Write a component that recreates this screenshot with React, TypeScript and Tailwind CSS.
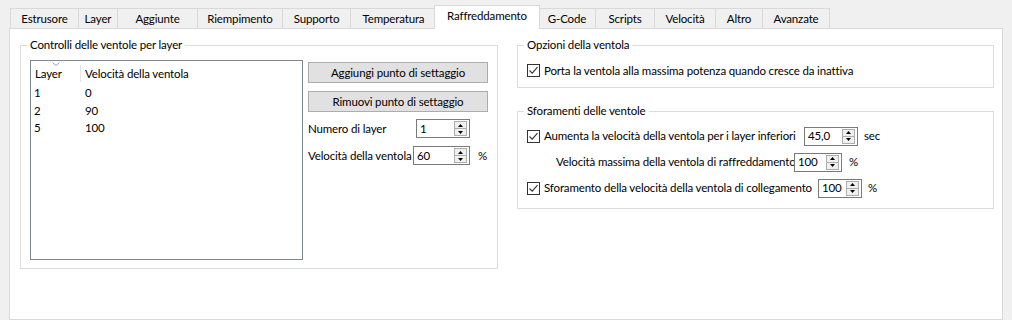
import React from 'react'

const tabs = ['Estrusore', 'Layer', 'Aggiunte', 'Riempimento', 'Supporto', 'Temperatura', 'Raffreddamento', 'G-Code', 'Scripts', 'Velocità', 'Altro', 'Avanzate']
const tabW: Record<string, string> = {
  Estrusore: 'w-[68px]', Layer: 'w-[39px]', Aggiunte: 'w-[80px]', Riempimento: 'w-[85px]', Supporto: 'w-[68px]',
  Temperatura: 'w-[86px]', Raffreddamento: 'w-[106px]', 'G-Code': 'w-[57px]', Scripts: 'w-[59px]', 'Velocità': 'w-[61px]',
  Altro: 'w-[47px]', Avanzate: 'w-[68px]',
}

const rows = [['1', '0'], ['2', '90'], ['5', '100']]

function Check() {
  return (
    <span className="flex h-[13px] w-[13px] shrink-0 items-center justify-center border border-[#333] bg-white">
      <svg width="11" height="11" viewBox="0 0 11 11"><path d="M1.5 5.5 L4.2 8.2 L9.5 2.2" fill="none" stroke="#333" strokeWidth="1.1" /></svg>
    </span>
  )
}

function Spin({ value, w }: { value: string; w: string }) {
  return (
    <div className={`flex h-[19px] ${w} shrink-0 items-center justify-between border border-[#7a7a7a] bg-white pl-[3px] pr-[2px]`}>
      <span className="leading-none">{value}</span>
      <div className="flex h-[15px] w-[13px] flex-col border border-[#adadad] bg-[#f0f0f0]">
        <div className="flex flex-1 items-center justify-center border-b border-[#adadad]">
          <svg width="5" height="3" viewBox="0 0 5 3"><path d="M0 3 L2.5 0 L5 3Z" fill="#000" /></svg>
        </div>
        <div className="flex flex-1 items-center justify-center">
          <svg width="5" height="3" viewBox="0 0 5 3"><path d="M0 0 L2.5 3 L5 0Z" fill="#000" /></svg>
        </div>
      </div>
    </div>
  )
}

function Group({ title, className, children }: { title: string; className: string; children: React.ReactNode }) {
  return (
    <fieldset className={`border border-[#dcdcdc] ${className}`}>
      <legend className="ml-[6px] px-[3px] leading-[16px]">{title}</legend>
      {children}
    </fieldset>
  )
}

export default function App() {
  return (
    <div className="h-[320px] w-[1012px] overflow-hidden whitespace-nowrap bg-[#f0f0f0] text-[11.5px] tracking-[-0.15px] text-[#000]" style={{ fontFamily: 'Lato, "Segoe UI", sans-serif' }}>
      <div className="flex h-[28px] items-end pl-[10px]">
        {tabs.map((t, i) => {
          const active = t === 'Raffreddamento'
          return active ? (
            <div key={t} className={`relative z-10 -mx-[2px] -mb-px flex h-[24px] ${tabW[t]} items-center justify-center border border-b-0 border-[#d9d9d9] bg-white pb-[3px]`}>{t}</div>
          ) : (
            <div key={t} className={`flex h-[20px] ${tabW[t]} items-center justify-center border-t border-l border-[#d9d9d9] bg-[#f0f0f0] ${i === tabs.length - 1 ? 'border-r' : ''}`}>{t}</div>
          )
        })}
      </div>
      <div className="ml-[9px] flex h-[292px] w-[994px] gap-[19px] border border-[#d9d9d9] bg-white pl-[10px] pt-[8px]">
        <Group title="Controlli delle ventole per layer" className="h-[232px] w-[478px]">
          <div className="flex gap-[5px] px-[9px] pt-[7px]">
            <div className="h-[200px] w-[273px] border border-[#828790] bg-white">
              <div className="relative flex h-[23px] items-end pb-[2px]">
                <svg className="absolute left-[21px] top-[1px]" width="8" height="4" viewBox="0 0 8 4"><path d="M0.5 0.5 L4 3.5 L7.5 0.5" fill="none" stroke="#9aa0a6" strokeWidth="1" /></svg>
                <div className="w-[50px] border-r border-[#e5e5e5] pl-[4px]">Layer</div>
                <div className="pl-[4px]">Velocità della ventola</div>
              </div>
              {rows.map(([a, b]) => (
                <div key={a} className="flex h-[17.5px] items-center">
                  <div className="w-[50px] pl-[3px]">{a}</div>
                  <div className="pl-[4px]">{b}</div>
                </div>
              ))}
            </div>
            <div className="flex flex-col pt-[2px]">
              <button className="h-[21px] w-[180px] border border-[#adadad] bg-[#e1e1e1]">Aggiungi punto di settaggio</button>
              <button className="mt-[8px] h-[21px] w-[180px] border border-[#adadad] bg-[#e1e1e1]">Rimuovi punto di settaggio</button>
              <div className="mt-[7px] flex items-center">
                <span className="w-[108px]">Numero di layer</span>
                <Spin value="1" w="w-[54px]" />
              </div>
              <div className="mt-[8px] flex items-center">
                <span className="w-[105px]">Velocità della ventola</span>
                <Spin value="60" w="w-[57px]" />
                <span className="ml-[8px]">%</span>
              </div>
            </div>
          </div>
        </Group>
        <div className="flex w-[477px] flex-col gap-[15px]">
          <Group title="Opzioni della ventola" className="h-[51px]">
            <div className="flex items-center gap-[4px] px-[9px] pt-[9px]">
              <Check />
              <span>Porta la ventola alla massima potenza quando cresce da inattiva</span>
            </div>
          </Group>
          <Group title="Sforamenti delle ventole" className="h-[106px]">
            <div className="flex flex-col px-[9px] pt-[7px]">
              <div className="flex h-[20px] items-center">
                <Check />
                <span className="ml-[4px] w-[260px]">Aumenta la velocità della ventola per i layer inferiori</span>
                <Spin value="45,0" w="w-[54px]" />
                <span className="ml-[6px]">sec</span>
              </div>
              <div className="mt-[6px] flex h-[20px] items-center pl-[29px]">
                <span className="w-[238px]">Velocità massima della ventola di raffreddamento</span>
                <Spin value="100" w="w-[48px]" />
                <span className="ml-[7px]">%</span>
              </div>
              <div className="mt-[6px] flex h-[20px] items-center">
                <Check />
                <span className="ml-[4px] w-[274px]">Sforamento della velocità della ventola di collegamento</span>
                <Spin value="100" w="w-[44px]" />
                <span className="ml-[6px]">%</span>
              </div>
            </div>
          </Group>
        </div>
      </div>
    </div>
  )
}
